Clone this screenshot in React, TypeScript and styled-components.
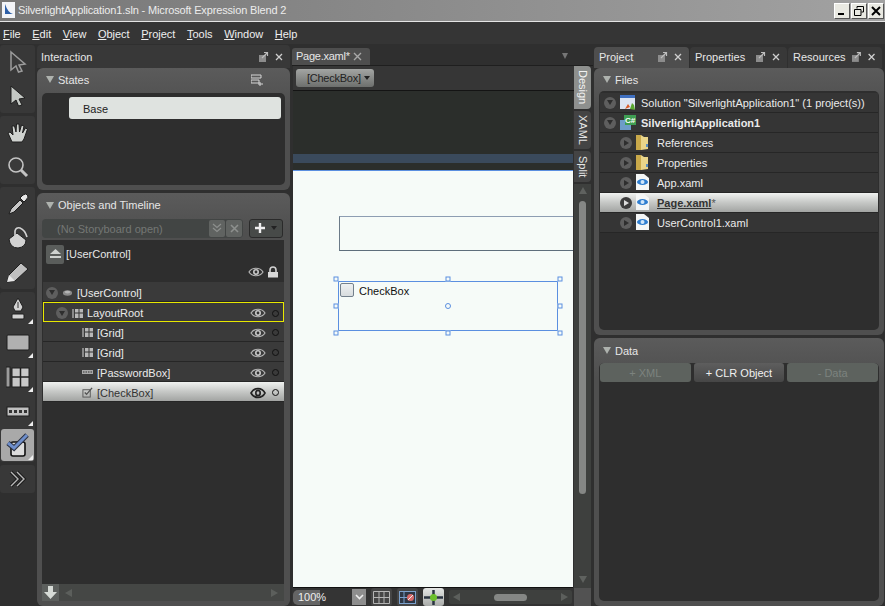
import React from 'react';
import styled, {createGlobalStyle} from 'styled-components';

const Global = createGlobalStyle`
  html, body {
    margin: 0;
    padding: 0;
    background: #2f2f2f;
    overflow: hidden;
  }
  * {
    box-sizing: border-box;
  }
`;

const Window = styled.div`
  width: 885px;
  height: 606px;
  display: flex;
  flex-direction: column;
  overflow: hidden;
  background: #303030;
  color: #e6e6e6;
  font-family: 'Liberation Sans', Arial, sans-serif;
  font-size: 11px;
`;

const TitleBar = styled.div`
  height: 22px;
  flex: none;
  display: flex;
  align-items: center;
  padding: 0 1px 1px 2px;
  gap: 3px;
  color: #ececec;
  font-size: 11px;
  background: linear-gradient(90deg, #777 0%, #8a8a8a 45%, #a2a2a2 100%);
  border-bottom: 1px solid #e4e4e4;
`;

const TitleText = styled.span`
  flex: 1;
  letter-spacing: -0.15px;
`;

const WinButtons = styled.div`
  display: flex;
  gap: 1px;
  margin-top: 1px;
`;

const WinButton = styled.div`
  width: 16px;
  height: 16px;
  background: #e9e9e2;
  border: 1px solid;
  border-color: #fff #555 #555 #fff;
  display: flex;
  align-items: center;
  justify-content: center;
`;

const MenuBar = styled.div`
  height: 22px;
  flex: none;
  display: flex;
  align-items: center;
  padding: 2px 0 0 3px;
  gap: 11.5px;
  background: #353535;
  font-size: 11px;
`;

const MenuItem = styled.span`
  color: #efefef;
  u {
    text-underline-offset: 1px;
  }
`;

const Main = styled.div`
  flex: 1;
  display: flex;
  min-height: 0;
  padding-top: 1px;
  background: #2f2f2f;
`;

const ToolColumn = styled.div`
  width: 35px;
  flex: none;
  display: flex;
  flex-direction: column;
  gap: 3px;
`;

const ToolGroup = styled.div<{$h: number}>`
  height: ${p => p.$h}px;
  background: #383838;
  border-radius: 3px;
  display: flex;
  flex-direction: column;
  align-items: center;
  justify-content: space-around;
`;

const Tool = styled.div<{$active?: boolean; $corner?: boolean}>`
  position: relative;
  width: 33px;
  height: 32px;
  display: flex;
  align-items: center;
  justify-content: center;
  border-radius: 3px;
  background: ${p => (p.$active ? '#a9a9a9' : 'transparent')};
  ${p =>
    p.$corner &&
    `&:after {
      content: '';
      position: absolute;
      right: 1px;
      bottom: 1px;
      border-style: solid;
      border-width: 0 0 5px 5px;
      border-color: transparent transparent #eee transparent;
    }`}
`;

const LeftColumn = styled.div`
  width: 253px;
  margin-left: 2px;
  flex: none;
  display: flex;
  flex-direction: column;
`;

const CenterColumn = styled.div`
  width: 301px;
  margin-left: 2px;
  flex: none;
  display: flex;
  flex-direction: column;
`;

const RightColumn = styled.div`
  flex: 1;
  margin-left: 1px;
  padding-right: 1px;
  display: flex;
  flex-direction: column;
`;

const DockHeader = styled.div`
  height: 23px;
  flex: none;
  display: flex;
  align-items: center;
  background: #383838;
  border-radius: 4px 4px 0 0;
  padding: 0 4px;
  font-size: 11px;
`;

const HeaderTitle = styled.span`
  flex: 1;
`;

const DockTabs = styled.div`
  height: 23px;
  flex: none;
  display: flex;
  gap: 1px;
`;

const DockTab = styled.div<{$active?: boolean; $w: number}>`
  width: ${p => p.$w}px;
  display: flex;
  align-items: center;
  gap: 5px;
  padding: 0 4px 2px 5px;
  border-radius: 4px 4px 0 0;
  background: ${p => (p.$active ? '#4e4e4e' : '#383838')};
  margin-top: 2px;
`;

const Panel = styled.div<{$h?: number}>`
  ${p => (p.$h ? `height: ${p.$h}px; flex: none;` : 'flex: 1; min-height: 0;')}
  display: flex;
  flex-direction: column;
  padding: 0 5px 5px;
  border-radius: 6px;
  background: linear-gradient(#5b5b5b, #4f4f4f 40px);
  margin-bottom: 3px;
  &:last-child {
    margin-bottom: 0;
  }
`;

const PanelTitle = styled.div<{$h?: number; $pb?: number}>`
  height: ${p => p.$h ?? 24}px;
  flex: none;
  display: flex;
  align-items: center;
  gap: 4px;
  padding: 0 4px ${p => p.$pb ?? 0}px 4px;
  font-size: 11px;
`;

const Triangle = styled.span`
  width: 0;
  height: 0;
  border-style: solid;
  border-width: 7px 4px 0;
  border-color: #aeb2ae transparent transparent;
`;

const Inner = styled.div`
  flex: 1;
  min-height: 0;
  display: flex;
  flex-direction: column;
  background: #2e2e2e;
  border-radius: 5px;
  overflow: hidden;
`;

const StateItem = styled.div`
  margin: 4px 4px 0 27px;
  height: 22px;
  display: flex;
  align-items: center;
  padding: 1px 0 0 14px;
  background: #dfe3e0;
  color: #222;
  border-radius: 3px;
  font-size: 11px;
`;

const StoryRow = styled.div`
  height: 22px;
  flex: none;
  display: flex;
  align-items: center;
  gap: 6px;
`;

const StoryField = styled.div`
  width: 201px;
  height: 19px;
  display: flex;
  align-items: center;
  padding-left: 15px;
  background: #424544;
  border-radius: 4px;
  color: #747774;
  font-size: 11px;
`;

const StoryFieldText = styled.span`
  flex: 1;
  padding-top: 1px;
`;

const StoryBtn = styled.div`
  width: 16px;
  height: 17px;
  margin-right: 1px;
  background: #606361;
  border-radius: 2px;
  display: flex;
  align-items: center;
  justify-content: center;
`;

const AddButton = styled.div`
  width: 34px;
  height: 19px;
  border: 1px solid #2a2a2a;
  border-radius: 3px;
  background: #474a48;
  display: flex;
  align-items: center;
  justify-content: center;
  gap: 6px;
`;

const TimelineTree = styled(Inner)`
  border-radius: 0;
  margin-top: 1px;
  margin-right: 1px;
`;

const ScopeHeader = styled.div`
  height: 42px;
  flex: none;
  display: flex;
  flex-direction: column;
  padding: 4px 4px 0 4px;
  background: #2e2e2e;
`;

const ScopeTop = styled.div`
  display: flex;
  align-items: center;
  gap: 2px;
  height: 20px;
  font-size: 11px;
`;

const ScopeBadge = styled.div`
  width: 18px;
  height: 19px;
  border-radius: 2px;
  background: #5a5d5b;
  display: flex;
  align-items: center;
  justify-content: center;
`;

const ScopeIcons = styled.div`
  display: flex;
  justify-content: flex-end;
  align-items: center;
  gap: 3px;
  margin-top: 2px;
  padding-right: 1px;
`;

const Row = styled.div<{$indent: number; $selected?: boolean; $marked?: boolean}>`
  height: 20px;
  flex: none;
  display: flex;
  align-items: center;
  gap: 4px;
  padding: 2px 0 0 ${p => p.$indent}px;
  margin-left: 1px;
  font-size: 11px;
  color: ${p => (p.$selected ? '#333' : '#eaeaea')};
  border-bottom: 1px solid #262626;
  background: ${p =>
    p.$selected
      ? 'linear-gradient(#f0f2f0, #c6c8c6 50%, #a2a4a2)'
      : '#3a3a3a'};
  ${p => p.$marked && 'outline: 1px solid #e8e800; outline-offset: -1px; border-bottom: none;'}
`;

const RowLabel = styled.span`
  flex: 1;
  white-space: nowrap;
`;

const Spacer = styled.div`
  flex: 1;
`;

const RowEnd = styled.div`
  display: flex;
  align-items: center;
  gap: 6px;
  padding-right: 5px;
`;

const Dot = styled.span`
  width: 7px;
  height: 7px;
  border-radius: 50%;
  border: 1px solid #111;
`;

const Expander = styled.span<{$open?: boolean; $strong?: boolean}>`
  width: 12px;
  height: 12px;
  flex: none;
  border-radius: 50%;
  background: ${p => (p.$strong ? '#3c3c3c' : '#5e5e5e')};
  display: flex;
  align-items: center;
  justify-content: center;
  &:after {
    content: '';
    border-style: solid;
    ${p =>
      p.$open
        ? 'border-width: 5px 3px 0; border-color: #2e2e2e transparent transparent;'
        : `border-width: 3px 0 3px 5px; border-color: transparent transparent transparent ${p.$strong ? '#ddd' : '#2e2e2e'};`}
  }
`;

const TreeBottom = styled.div`
  height: 17px;
  flex: none;
  display: flex;
  align-items: center;
  background: #454745;
`;

const DownBtn = styled.div`
  width: 17px;
  height: 17px;
  background: #5c5f5d;
  display: flex;
  align-items: center;
  justify-content: center;
`;

const HScroll = styled.div`
  flex: 1;
  display: flex;
  justify-content: space-between;
  padding: 0 6px;
  align-items: center;
`;

const ArrowL = styled.span`
  border-style: solid;
  border-width: 4px 7px 4px 0;
  border-color: transparent #5c5f5c transparent transparent;
`;

const ArrowR = styled.span`
  border-style: solid;
  border-width: 4px 0 4px 7px;
  border-color: transparent transparent transparent #5c5f5c;
`;

const DocTabStrip = styled.div`
  height: 21px;
  flex: none;
  display: flex;
  align-items: center;
  justify-content: space-between;
  padding: 2px 25px 0 0;
  border-bottom: 1px solid #1f1f1f;
`;

const DocTab = styled.div`
  width: 78px;
  height: 17px;
  display: flex;
  align-items: center;
  gap: 3px;
  padding-left: 4px;
  background: #4e4e4e;
  border-radius: 3px 3px 0 0;
  font-size: 11px;
  letter-spacing: -0.25px;
`;

const MutedCaret = styled.span`
  border-style: solid;
  border-width: 6px 3.5px 0;
  border-color: #767676 transparent transparent;
`;

const DesignRow = styled.div`
  flex: 1;
  min-height: 0;
  display: flex;
`;

const DesignMain = styled.div`
  width: 282px;
  flex: none;
  display: flex;
  flex-direction: column;
`;

const Breadcrumb = styled.div`
  height: 25px;
  flex: none;
  display: flex;
  align-items: center;
  padding-left: 3px;
  background: #363636;
  border-bottom: 1px solid #141414;
  margin-left: 1px;
`;

const CrumbButton = styled.div`
  width: 78px;
  height: 18px;
  display: flex;
  align-items: center;
  justify-content: space-between;
  padding: 0 4px 0 11px;
  border-radius: 3px;
  background: linear-gradient(#a3a5a3, #6d6f6d);
  color: #222;
  font-size: 11px;
  letter-spacing: -0.25px;
`;

const CrumbCaret = styled.span`
  border-style: solid;
  border-width: 4px 3px 0;
  border-color: #222 transparent transparent;
`;

const Artboard = styled.div`
  flex: 1;
  min-height: 0;
  margin: 0 1px;
  display: flex;
  flex-direction: column;
  background: #2b2e2b;
  border-bottom: 1px solid #111;
`;

const BlueStrip = styled.div`
  height: 9px;
  margin: 63px 0 7px;
  flex: none;
  background: #3a4a5c;
`;

const Page = styled.div`
  flex: 1;
  position: relative;
  overflow: hidden;
  background: #f6fbf8;
  border-top: 1px solid #5b8fe0;
`;

const TextBoxShape = styled.div`
  position: absolute;
  left: 46px;
  top: 45px;
  width: 260px;
  height: 35px;
  border: 1px solid #8d9db2;
  border-left-color: #6b7a88;
  border-bottom-color: #5e6e7c;
`;

const Selection = styled.div`
  position: absolute;
  left: 45px;
  top: 110px;
  width: 220px;
  height: 50px;
  border: 1px solid #5b8fe0;
`;

const Handle = styled.span<{$x: number; $y: number}>`
  position: absolute;
  left: ${p => p.$x}px;
  top: ${p => p.$y}px;
  width: 5px;
  height: 5px;
  background: #f6fbf8;
  border: 1px solid #5b8fe0;
  transform: translate(-50%, -50%);
`;

const CenterHandle = styled(Handle)`
  width: 6px;
  height: 6px;
  border-radius: 50%;
`;

const CheckRow = styled.div`
  display: flex;
  align-items: center;
  gap: 5px;
  padding: 1px 0 0 1px;
  color: #111;
  font-size: 11px;
`;

const CheckLabel = styled.span`
  padding-top: 2px;
`;

const CheckSquare = styled.span`
  width: 14px;
  height: 14px;
  border: 1px solid #73808c;
  border-radius: 2px;
  background: linear-gradient(#eef1f2, #d8dcde);
`;

const BottomBar = styled.div`
  height: 18px;
  flex: none;
  display: flex;
  align-items: center;
  padding-left: 1px;
  background: #333;
`;

const ZoomField = styled.div`
  width: 59px;
  height: 15px;
  display: flex;
  align-items: center;
  padding-left: 5px;
  color: #eee;
  font-size: 11px;
  border-radius: 5px 0 0 5px;
  background: linear-gradient(90deg, #656565 0, #656565 27px, #343434 27px);
`;

const ZoomDrop = styled.div`
  width: 14px;
  height: 16px;
  background: #8e8e8e;
  display: flex;
  align-items: center;
  justify-content: center;
`;

const BarButton = styled.div<{$light?: boolean}>`
  width: 21px;
  height: 18px;
  margin-left: 5px;
  border-radius: 3px;
  display: flex;
  align-items: center;
  justify-content: center;
  background: ${p => (p.$light ? 'linear-gradient(#e4e6e4, #a9aba9)' : '#454545')};
`;

const CanvasScroll = styled.div`
  flex: 1;
  height: 14px;
  margin: 0 2px 0 5px;
  display: flex;
  align-items: center;
  justify-content: space-between;
  padding: 0 4px;
  background: #3e403e;
  border-radius: 2px;
`;

const ScrollThumb = styled.span`
  width: 33px;
  height: 7px;
  border-radius: 4px;
  background: #858785;
`;

const SideColumn = styled.div`
  width: 19px;
  flex: none;
  display: flex;
  flex-direction: column;
  gap: 2px;
`;

const SideTab = styled.div<{$active?: boolean; $h: number}>`
  height: ${p => p.$h}px;
  flex: none;
  width: 17px;
  writing-mode: vertical-rl;
  display: flex;
  align-items: center;
  justify-content: center;
  font-size: 11px;
  border-radius: 0 4px 4px 0;
  background: ${p => (p.$active ? '#8e908e' : '#444')};
  color: ${p => (p.$active ? '#f2f2f2' : '#e4e4e4')};
`;

const VScroll = styled.div`
  flex: 1;
  width: 17px;
  min-height: 0;
  display: flex;
  flex-direction: column;
  align-items: center;
  padding: 3px 0 5px;
  background: #3e403e;
`;

const ArrowUp = styled.span`
  flex: none;
  border-style: solid;
  border-width: 0 4px 7px;
  border-color: transparent transparent #5f625f;
`;

const ArrowDown = styled.span`
  flex: none;
  border-style: solid;
  border-width: 7px 4px 0;
  border-color: #5f625f transparent transparent;
`;

const VThumb = styled.div`
  width: 7px;
  height: 293px;
  margin-top: 7px;
  border-radius: 4px;
  background: #858785;
`;

const VGap = styled.div`
  flex: 1;
`;

const ScrollCorner = styled.div`
  height: 18px;
  width: 17px;
  flex: none;
  margin-top: -2px;
  background: #525252;
`;

const DataButtons = styled.div`
  display: flex;
  gap: 3px;
  padding: 0 1px;
  height: 19px;
  flex: none;
`;

const DataButton = styled.div<{$enabled?: boolean}>`
  flex: 1;
  display: flex;
  align-items: center;
  justify-content: center;
  border-radius: 3px;
  font-size: 11px;
  background: ${p => (p.$enabled ? 'linear-gradient(#5e5e5e, #464646)' : '#5d625e')};
  color: ${p => (p.$enabled ? '#f0f0f0' : '#7c827e')};
`;

const FileRow = styled(Row)`
  margin: 0 1px;
  padding-top: 0;
  background: ${p => (p.$selected ? 'linear-gradient(#f0f2f0, #c6c8c6 50%, #a2a4a2)' : '#353535')};
  font-size: 11px;
  gap: 4px;
`;

const FilesTop = styled.div`
  height: 2px;
  flex: none;
`;

const FileName = styled.span<{$bold?: boolean; $gap?: number}>`
  font-weight: ${p => (p.$bold ? 700 : 400)};
  margin-left: ${p => p.$gap ?? 1}px;
  white-space: nowrap;
`;

const Dirty = styled.span`
  color: #555;
  font-weight: 400;
`;

const DockIcons = () => (
  <svg width="28" height="12" viewBox="0 0 28 12">
    <rect x="1" y="4" width="7" height="7" fill="#8c8c8c" />
    <path d="M4 7 L9 2 M6 1.5 H9.5 V5" stroke="#bdbdbd" strokeWidth="1.2" fill="none" />
    <path d="M18 3 L24 9 M24 3 L18 9" stroke="#cfcfcf" strokeWidth="1.3" />
  </svg>
);

const Eye = ({bold}: {bold?: boolean}) => (
  <svg width="16" height={bold ? 14 : 12} viewBox="0 0 16 12" preserveAspectRatio="none">
    <path
      d="M1 6 C4 1 12 1 15 6 C12 11 4 11 1 6 Z"
      fill="none"
      stroke={bold ? '#222' : '#b4b4b4'}
      strokeWidth={bold ? 1.6 : 1.2}
    />
    <circle cx="8" cy="6" r="3" fill={bold ? '#222' : '#c8c8c8'} />
    <circle cx="8" cy="6" r="1.4" fill={bold ? '#bbb' : '#333'} />
  </svg>
);

const Lock = () => (
  <svg width="12" height="12" viewBox="0 0 12 12">
    <path d="M3 6 V4 a3 3 0 0 1 6 0 V6" fill="none" stroke="#d0d0d0" strokeWidth="1.6" />
    <rect x="1" y="6" width="10" height="5.5" fill="#d8d8d8" />
  </svg>
);

const GridGlyph = () => (
  <svg width="11" height="11" viewBox="0 0 11 11">
    <rect x="0" y="1" width="2" height="9" fill="#888" />
    <rect x="3" y="1" width="8" height="9" fill="#b8b8b8" />
    <path d="M7 1 V10 M3 5 H11" stroke="#333" />
  </svg>
);

const PasswordGlyph = () => (
  <svg width="11" height="5" viewBox="0 0 11 5">
    <rect width="11" height="4" fill="#a8a8a8" />
    <path d="M1 2 H10" stroke="#333" strokeDasharray="1.5 1" />
  </svg>
);

const CheckGlyph = () => (
  <svg width="11" height="11" viewBox="0 0 12 12">
    <rect x="1" y="3" width="8" height="8" fill="none" stroke="#555" />
    <path d="M3 6 L5 8 L11 1" fill="none" stroke="#555" strokeWidth="1.5" />
  </svg>
);

const ElementGlyph = () => (
  <svg width="11" height="8" viewBox="0 0 12 8">
    <ellipse cx="6" cy="4" rx="5" ry="3" fill="#8a8a8a" />
    <ellipse cx="6" cy="3" rx="3" ry="1.5" fill="#b4b4b4" />
  </svg>
);

const Folder = () => (
  <svg width="13" height="17" viewBox="0 0 13 17">
    <path d="M0 1 H5 V16 H0 Z" fill="#c9a94a" />
    <path d="M5 1 L8 3 H12 V15 L5 16 Z" fill="#e9d58a" />
    <path d="M10 10 h2 v3 h-2 z" fill="#5b8fc0" />
  </svg>
);

const XamlFile = () => (
  <svg width="13" height="17" viewBox="0 0 13 17">
    <path d="M0 0 H8 L13 4 V16 H0 Z" fill="#f4f6f6" />
    <ellipse cx="6.5" cy="8" rx="5.5" ry="3" fill="#2f7ed0" />
    <circle cx="6.5" cy="8" r="2" fill="#cfe6fa" />
  </svg>
);

const SolutionIcon = () => (
  <svg width="16" height="16" viewBox="0 0 16 16">
    <rect x="0" y="0" width="15" height="14" fill="#dce4f2" />
    <rect x="0" y="0" width="15" height="3" fill="#3f6fc0" />
    <path d="M5 14 L8 9 L10 12 Z" fill="#d85a28" />
    <path d="M10 14 L12 8 L14 10 L15 15 Z" fill="#5aa830" />
  </svg>
);

const ProjectIcon = () => (
  <svg width="16" height="16" viewBox="0 0 16 16">
    <rect x="4" y="0" width="12" height="10" fill="#3f9e52" />
    <text x="5" y="8" fontSize="8" fontWeight="700" fill="#fff" fontFamily="Liberation Sans, sans-serif">C#</text>
    <path d="M0 5 H5 V15 H0 Z M5 10 H11 V15 H5 Z" fill="#6d9cc8" />
  </svg>
);

const tools: {h: number; items: {icon: React.ReactNode; corner?: boolean; active?: boolean}[]}[] = [
  {
    h: 68,
    items: [
      {
        icon: (
          <svg width="20" height="24" viewBox="0 0 20 24">
            <path d="M3 2 L17 14 L11 15 L14 21 L10.5 22 L8 16 L3 20 Z" fill="#3a3a3a" stroke="#9c9c9c" strokeWidth="1.5" />
          </svg>
        ),
      },
      {
        icon: (
          <svg width="20" height="24" viewBox="0 0 20 24">
            <path d="M3 2 L17 14 L11 15 L14 21 L10.5 22 L8 16 L3 20 Z" fill="#c4c8c4" stroke="#1e1e1e" strokeWidth="1" />
          </svg>
        ),
      },
    ],
  },
  {
    h: 68,
    items: [
      {
        icon: (
          <svg width="22" height="24" viewBox="0 0 22 24">
            <path
              d="M5 21 L1 12 L3 11 L6 14 L5 5 L7.5 5 L9 11 L9.5 3 L12 3 L12.5 11 L14.5 4 L17 5 L15.5 12 L18.5 7 L20.5 8 L17 18 L15 21 Z"
              fill="#cfd2cf"
              stroke="#1e1e1e"
            />
          </svg>
        ),
      },
      {
        icon: (
          <svg width="22" height="22" viewBox="0 0 22 22">
            <circle cx="9" cy="9" r="7" fill="#3a3a3a" stroke="#c4c4c4" strokeWidth="1.6" />
            <path d="M14 14 L20 20" stroke="#c4c4c4" strokeWidth="3" />
          </svg>
        ),
      },
    ],
  },
  {
    h: 102,
    items: [
      {
        icon: (
          <svg width="22" height="24" viewBox="0 0 22 24">
            <path d="M2 22 L4 17 L13 8 L16 11 L7 20 Z" fill="#c8c8c8" stroke="#1e1e1e" />
            <path d="M13 6 L16 3 Q19 1 20.5 3 Q22 5 19 8 L17 10 Z" fill="#e8e8e8" stroke="#1e1e1e" />
          </svg>
        ),
      },
      {
        icon: (
          <svg width="24" height="24" viewBox="0 0 24 24">
            <path d="M3 13 L11 7 L20 14 Q20 21 12 22 Q4 22 3 13 Z" fill="#d2d2d2" stroke="#1e1e1e" />
            <path d="M9 11 V5 Q10 1 14 2 Q19 4 21 11" fill="none" stroke="#d2d2d2" strokeWidth="1.6" />
          </svg>
        ),
      },
      {
        icon: (
          <svg width="24" height="22" viewBox="0 0 24 22">
            <path d="M1 21 L3 14 L15 2 L22 8 L9 20 Z" fill="#c0c0c0" stroke="#1e1e1e" />
            <path d="M1 21 L3 14 L9 20 Z" fill="#e8e8e8" />
          </svg>
        ),
      },
    ],
  },
  {
    h: 170,
    items: [
      {
        corner: true,
        icon: (
          <svg width="18" height="24" viewBox="0 0 18 24">
            <path d="M9 1 L14 10 L12 14 H6 L4 10 Z" fill="#d2d2d2" stroke="#1e1e1e" />
            <rect x="3" y="17" width="12" height="5" rx="1" fill="#d2d2d2" stroke="#1e1e1e" />
            <path d="M9 5 V11" stroke="#333" />
          </svg>
        ),
      },
      {
        corner: true,
        icon: (
          <svg width="24" height="18" viewBox="0 0 24 18">
            <rect x="1" y="1" width="22" height="15" rx="1" fill="#b0b0b0" stroke="#1e1e1e" />
          </svg>
        ),
      },
      {
        corner: true,
        icon: (
          <svg width="24" height="24" viewBox="0 0 24 24">
            <rect x="0" y="2" width="4" height="20" fill="#9c9c9c" stroke="#1e1e1e" />
            <rect x="6" y="3" width="17" height="19" fill="#c8c8c8" stroke="#1e1e1e" />
            <path d="M14.5 3 V22 M6 12 H23" stroke="#1e1e1e" strokeWidth="1.5" />
          </svg>
        ),
      },
      {
        corner: true,
        icon: (
          <svg width="24" height="11" viewBox="0 0 24 11">
            <rect x="1" y="1" width="22" height="9" fill="#c0c0c0" stroke="#1e1e1e" />
            <path d="M3 5.5 H21" stroke="#333" strokeWidth="3" strokeDasharray="3 2" />
          </svg>
        ),
      },
      {
        corner: true,
        active: true,
        icon: (
          <svg width="24" height="24" viewBox="0 0 24 24">
            <rect x="5" y="9" width="14" height="14" rx="2" fill="#dcdcdc" stroke="#111" strokeWidth="1.6" />
            <path d="M2 10 L8 15 L21 2" fill="none" stroke="#2a3040" strokeWidth="5" />
            <path d="M2 10 L8 15 L21 2" fill="none" stroke="#6e8ecb" strokeWidth="3" />
          </svg>
        ),
      },
    ],
  },
];

const menus: [string, string][] = [
  ['F', 'ile'],
  ['E', 'dit'],
  ['V', 'iew'],
  ['O', 'bject'],
  ['P', 'roject'],
  ['T', 'ools'],
  ['W', 'indow'],
  ['H', 'elp'],
];

const timelineRows = [
  {label: '[Grid]', glyph: <GridGlyph />},
  {label: '[Grid]', glyph: <GridGlyph />},
  {label: '[PasswordBox]', glyph: <PasswordGlyph />},
];

const handles: [number, number][] = [
  [-3, -3],
  [109, -3],
  [221, -3],
  [-3, 24],
  [221, 24],
  [-3, 51],
  [109, 51],
  [221, 51],
];

export default function App() {
  return (
    <Window>
      <Global />
      <TitleBar>
        <svg width="13" height="16" viewBox="0 0 13 16">
          <rect width="13" height="16" fill="#f2f4f8" />
          <path d="M3 2 V12 H11 Q6 11 3 2 Z" fill="#2d5fa8" />
        </svg>
        <TitleText>SilverlightApplication1.sln - Microsoft Expression Blend 2</TitleText>
        <WinButtons>
          <WinButton>
            <svg width="10" height="10" viewBox="0 0 10 10">
              <rect x="1" y="7" width="6" height="2" fill="#000" />
            </svg>
          </WinButton>
          <WinButton>
            <svg width="10" height="10" viewBox="0 0 10 10">
              <path d="M3 2.5 V0.5 H9.5 V6 H7.5 M0.5 3.5 H7 V9.5 H0.5 Z" fill="none" stroke="#000" />
            </svg>
          </WinButton>
          <WinButton>
            <svg width="10" height="10" viewBox="0 0 10 10">
              <path d="M1 1 L9 9 M9 1 L1 9" stroke="#000" strokeWidth="2" />
            </svg>
          </WinButton>
        </WinButtons>
      </TitleBar>
      <MenuBar>
        {menus.map(([key, rest]) => (
          <MenuItem key={key}>
            <u>{key}</u>
            {rest}
          </MenuItem>
        ))}
      </MenuBar>
      <Main>
        <ToolColumn>
          {tools.map((group, g) => (
            <ToolGroup key={g} $h={group.h}>
              {group.items.map((tool, t) => (
                <Tool key={t} $corner={tool.corner} $active={tool.active}>
                  {tool.icon}
                </Tool>
              ))}
            </ToolGroup>
          ))}
          <ToolGroup $h={28}>
            <Tool>
              <svg width="18" height="18" viewBox="0 0 18 18">
                <path d="M2 2 L9 9 L2 16 M8 2 L15 9 L8 16" fill="none" stroke="#1c1c1c" strokeWidth="3.5" />
                <path d="M2 2 L9 9 L2 16 M8 2 L15 9 L8 16" fill="none" stroke="#b8b8b8" strokeWidth="1.4" />
              </svg>
            </Tool>
          </ToolGroup>
        </ToolColumn>

        <LeftColumn>
          <DockHeader>
            <HeaderTitle>Interaction</HeaderTitle>
            <DockIcons />
          </DockHeader>
          <Panel $h={122}>
            <PanelTitle $h={25} $pb={2}>
              <Triangle />
              <HeaderTitle>States</HeaderTitle>
              <svg width="12" height="13" viewBox="0 0 12 13" style={{marginRight: 18}}>
                <path d="M0 2 H10 V5 H0 Z M0 7 H8 V10 H0 Z" fill="none" stroke="#d6d6d6" />
                <path d="M9 9 V13 M7 11 H12" stroke="#d6d6d6" />
              </svg>
            </PanelTitle>
            <Inner>
              <StateItem>Base</StateItem>
            </Inner>
          </Panel>
          <Panel>
            <PanelTitle>
              <Triangle />
              <HeaderTitle>Objects and Timeline</HeaderTitle>
            </PanelTitle>
            <StoryRow>
              <StoryField>
                <StoryFieldText>(No Storyboard open)</StoryFieldText>
                <StoryBtn>
                  <svg width="10" height="10" viewBox="0 0 10 10">
                    <path d="M1 1 L5 4.5 L9 1 M1 5 L5 8.5 L9 5" fill="none" stroke="#8d908e" strokeWidth="1.2" />
                  </svg>
                </StoryBtn>
                <StoryBtn>
                  <svg width="9" height="9" viewBox="0 0 9 9">
                    <path d="M1 1 L8 8 M8 1 L1 8" stroke="#8d908e" strokeWidth="1.6" />
                  </svg>
                </StoryBtn>
              </StoryField>
              <AddButton>
                <svg width="10" height="10" viewBox="0 0 10 10">
                  <path d="M5 0 V10 M0 5 H10" stroke="#f0f0f0" strokeWidth="2.4" />
                </svg>
                <CrumbCaret />
              </AddButton>
            </StoryRow>
            <TimelineTree>
              <ScopeHeader>
                <ScopeTop>
                  <ScopeBadge>
                    <svg width="13" height="11" viewBox="0 0 13 11">
                      <path d="M6.5 0 L12 5 H1 Z M1 7 H12 V9 H1 Z" fill="#cfd2cf" />
                    </svg>
                  </ScopeBadge>
                  [UserControl]
                </ScopeTop>
                <ScopeIcons>
                  <Eye />
                  <Lock />
                </ScopeIcons>
              </ScopeHeader>
              <Row $indent={3}>
                <Expander $open />
                <ElementGlyph />
                <RowLabel>[UserControl]</RowLabel>
              </Row>
              <Row $indent={13} $marked>
                <Expander $open />
                <GridGlyph />
                <RowLabel>LayoutRoot</RowLabel>
                <RowEnd>
                  <Eye />
                  <Dot />
                </RowEnd>
              </Row>
              {timelineRows.map((row, i) => (
                <Row key={i} $indent={39}>
                  {row.glyph}
                  <RowLabel>{row.label}</RowLabel>
                  <RowEnd>
                    <Eye />
                    <Dot />
                  </RowEnd>
                </Row>
              ))}
              <Row $indent={39} $selected>
                <CheckGlyph />
                <RowLabel>[CheckBox]</RowLabel>
                <RowEnd>
                  <Eye bold />
                  <Dot />
                </RowEnd>
              </Row>
              <Spacer />
              <TreeBottom>
                <DownBtn>
                  <svg width="13" height="13" viewBox="0 0 13 13">
                    <path d="M4 0 H9 V6 H13 L6.5 13 L0 6 H4 Z" fill="#d6dad6" />
                  </svg>
                </DownBtn>
                <HScroll>
                  <ArrowL />
                  <ArrowR />
                </HScroll>
              </TreeBottom>
            </TimelineTree>
          </Panel>
        </LeftColumn>

        <CenterColumn>
          <DocTabStrip>
            <DocTab>
              Page.xaml*
              <svg width="9" height="9" viewBox="0 0 9 9">
                <path d="M1 1 L8 8 M8 1 L1 8" stroke="#a8a8a8" strokeWidth="1.4" />
              </svg>
            </DocTab>
            <MutedCaret />
          </DocTabStrip>
          <DesignRow>
            <DesignMain>
              <Breadcrumb>
                <CrumbButton>
                  [CheckBox]
                  <CrumbCaret />
                </CrumbButton>
              </Breadcrumb>
              <Artboard>
                <BlueStrip />
                <Page>
                  <TextBoxShape />
                  <Selection>
                    <CheckRow>
                      <CheckSquare />
                      <CheckLabel>CheckBox</CheckLabel>
                    </CheckRow>
                    {handles.map(([x, y], i) => (
                      <Handle key={i} $x={x} $y={y} />
                    ))}
                    <CenterHandle $x={109} $y={24} />
                  </Selection>
                </Page>
              </Artboard>
              <BottomBar>
                <ZoomField>100%</ZoomField>
                <ZoomDrop>
                  <svg width="9" height="6" viewBox="0 0 9 6">
                    <path d="M1 1 L4.5 4.5 L8 1" fill="none" stroke="#eee" strokeWidth="1.6" />
                  </svg>
                </ZoomDrop>
                <BarButton>
                  <svg width="17" height="13" viewBox="0 0 17 13">
                    <path d="M.5 .5 H16.5 V12.5 H.5 Z M6 .5 V12.5 M11 .5 V12.5 M.5 6.5 H16.5" fill="none" stroke="#b4b4b4" />
                  </svg>
                </BarButton>
                <BarButton>
                  <svg width="17" height="13" viewBox="0 0 17 13">
                    <rect x=".5" y=".5" width="16" height="12" fill="#2d3644" stroke="#7ba0cc" />
                    <path d="M5 .5 V12.5 M.5 6.5 H8" stroke="#7ba0cc" />
                    <circle cx="11.5" cy="6.5" r="3.5" fill="#d86a6a" />
                    <path d="M9 9 L14 4" stroke="#eee" />
                  </svg>
                </BarButton>
                <BarButton $light>
                  <svg width="19" height="15" viewBox="0 0 19 15">
                    <path d="M0 7.5 H19" stroke="#2a3340" strokeWidth="2.5" />
                    <path d="M9.5 0 V15" stroke="#2a3340" strokeWidth="2.5" />
                    <circle cx="9.5" cy="7.5" r="3.5" fill="#6cc02c" />
                  </svg>
                </BarButton>
                <CanvasScroll>
                  <ArrowL />
                  <ScrollThumb />
                  <ArrowR />
                </CanvasScroll>
              </BottomBar>
            </DesignMain>
            <SideColumn>
              <SideTab $active $h={43}>Design</SideTab>
              <SideTab $h={38}>XAML</SideTab>
              <SideTab $h={31}>Split</SideTab>
              <VScroll>
                <ArrowUp />
                <VThumb />
                <VGap />
                <ArrowDown />
              </VScroll>
              <ScrollCorner />
            </SideColumn>
          </DesignRow>
        </CenterColumn>

        <RightColumn>
          <DockTabs>
            <DockTab $active $w={95}>
              <HeaderTitle>Project</HeaderTitle>
              <DockIcons />
            </DockTab>
            <DockTab $w={97}>
              <HeaderTitle>Properties</HeaderTitle>
              <DockIcons />
            </DockTab>
            <DockTab $w={94}>
              <HeaderTitle>Resources</HeaderTitle>
              <DockIcons />
            </DockTab>
          </DockTabs>
          <Panel $h={267}>
            <PanelTitle $h={23}>
              <Triangle />
              <HeaderTitle>Files</HeaderTitle>
            </PanelTitle>
            <Inner>
              <FilesTop />
              <FileRow $indent={4}>
                <Expander $open />
                <SolutionIcon />
                <FileName>Solution "SilverlightApplication1" (1 project(s))</FileName>
              </FileRow>
              <FileRow $indent={4}>
                <Expander $open />
                <ProjectIcon />
                <FileName $bold>SilverlightApplication1</FileName>
              </FileRow>
              <FileRow $indent={20}>
                <Expander />
                <Folder />
                <FileName $gap={4}>References</FileName>
              </FileRow>
              <FileRow $indent={20}>
                <Expander />
                <Folder />
                <FileName $gap={4}>Properties</FileName>
              </FileRow>
              <FileRow $indent={20}>
                <Expander />
                <XamlFile />
                <FileName $gap={4}>App.xaml</FileName>
              </FileRow>
              <FileRow $indent={20} $selected>
                <Expander $strong />
                <XamlFile />
                <FileName $gap={4} $bold>
                  <u>Page.xaml</u>
                  <Dirty>*</Dirty>
                </FileName>
              </FileRow>
              <FileRow $indent={20}>
                <Expander />
                <XamlFile />
                <FileName $gap={4}>UserControl1.xaml</FileName>
              </FileRow>
            </Inner>
          </Panel>
          <Panel>
            <PanelTitle $h={25}>
              <Triangle />
              <HeaderTitle>Data</HeaderTitle>
            </PanelTitle>
            <Inner>
              <DataButtons>
                <DataButton>+ XML</DataButton>
                <DataButton $enabled>+ CLR Object</DataButton>
                <DataButton>- Data</DataButton>
              </DataButtons>
            </Inner>
          </Panel>
        </RightColumn>
      </Main>
    </Window>
  );
}
